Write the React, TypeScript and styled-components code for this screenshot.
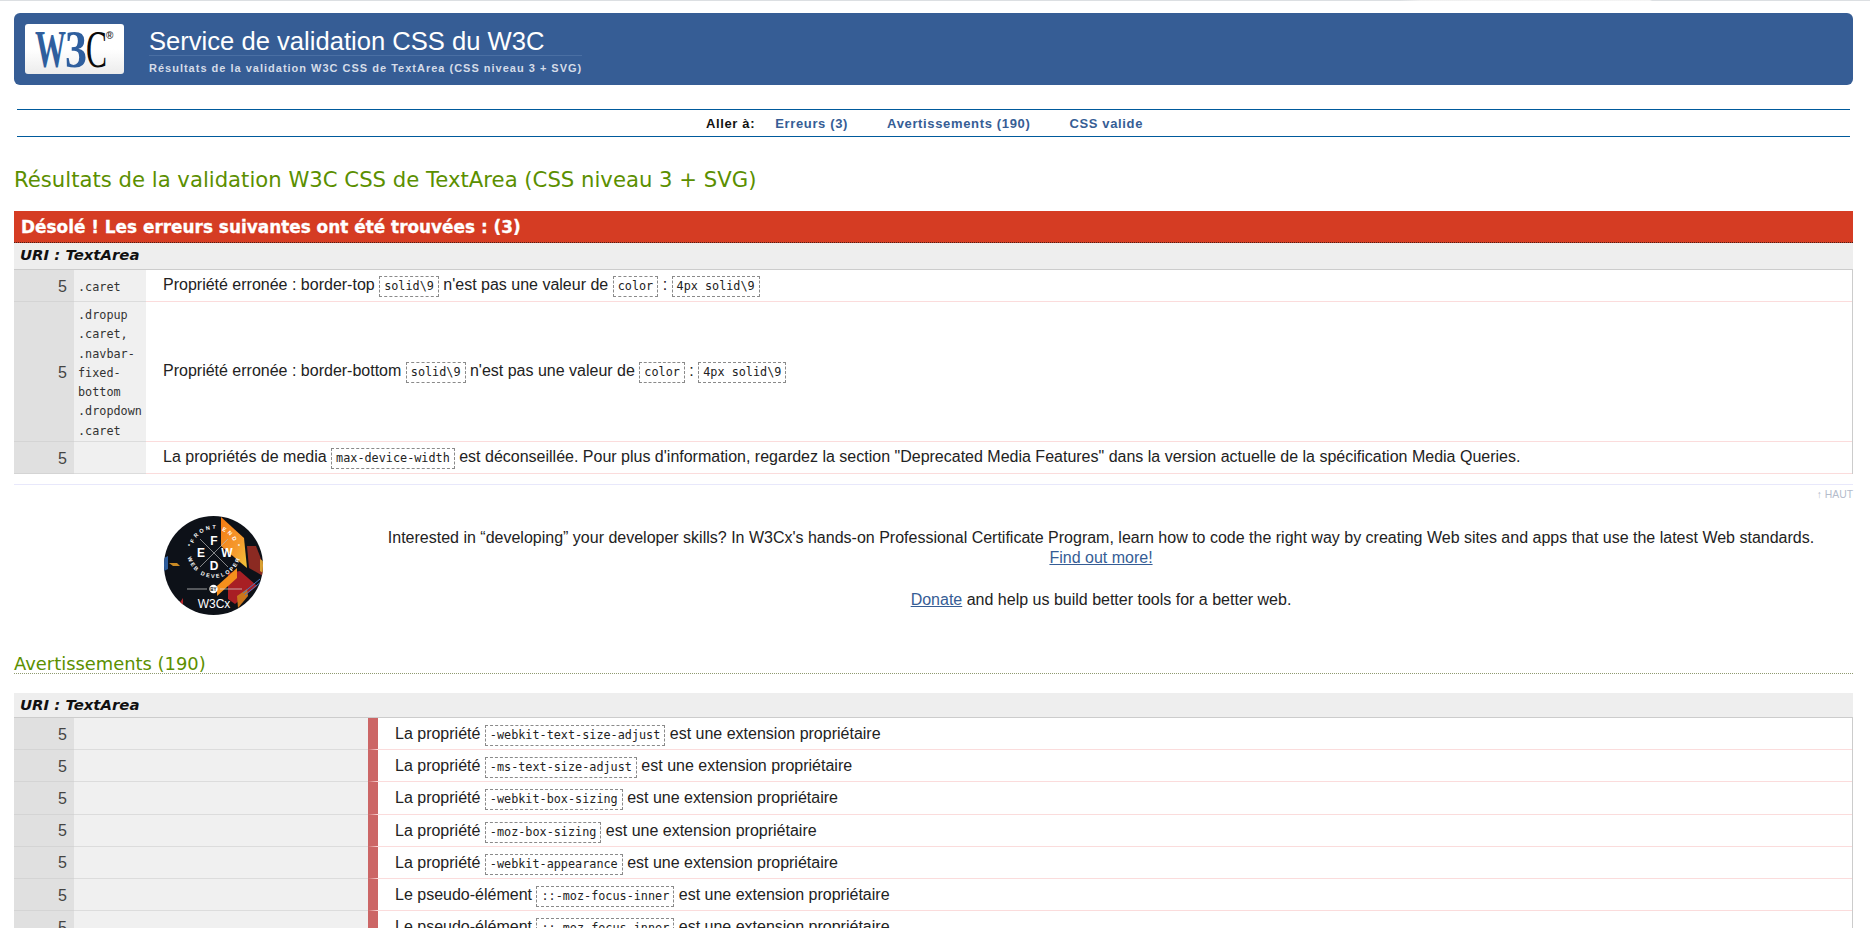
import React from "react";
import styled, { createGlobalStyle } from "styled-components";

const Global = createGlobalStyle`
  html, body { margin: 0; padding: 0; height: 928px; overflow: hidden; background: #fff; }
  body { font-family: "Liberation Sans", Arial, sans-serif; color: #222; }
`;

const TopEdge = styled.div`
  height: 1px;
  background: linear-gradient(90deg, #dcdfe2 0, #dcdfe2 1400px, #f0f0f0 1420px, #f4f4f4 1650px, #dcdfe2 1652px);
`;
const Page = styled.div`
  padding: 12px 17px 0 14px;
`;
const Banner = styled.header`
  height: 72px;
  background: #365d95;
  border-radius: 6px;
  display: flex;
  align-items: flex-start;
  padding: 11px 0 0 11px;
  box-sizing: border-box;
`;
const LogoBox = styled.div`
  width: 99px;
  height: 50px;
  border-radius: 3px;
  background: linear-gradient(180deg, #fff 0, #fff 50%, #ececec 100%);
  flex: none;
`;
const Titles = styled.div`
  margin-left: 25px;
`;
const Title = styled.h1`
  margin: 0;
  font: 400 25.6px/34px "Liberation Sans", Arial, sans-serif;
  color: #fff;
  border-bottom: 1px solid #4a6fa3;
  height: 31px;
`;
const Subtitle = styled.p`
  margin: 6px 0 0;
  font: 700 11px/13px "Liberation Sans", Arial, sans-serif;
  letter-spacing: 1px;
  color: #d5dce8;
`;
const Nav = styled.nav`
  margin: 24px 3px 0 3px;
  height: 26px;
  border-top: 1px solid #005a9c;
  border-bottom: 1px solid #005a9c;
  display: flex;
  justify-content: center;
  align-items: center;
  gap: 39px;
  padding-right: 18px;
  font: 700 13px "Liberation Sans", Arial, sans-serif;
  letter-spacing: 0.65px;
`;
const NavLabel = styled.span`
  color: #111;
  margin-right: -19px;
`;
const NavLink = styled.a`
  color: #365d95;
  text-decoration: none;
`;
const PageHeading = styled.h2`
  margin: 29px 0 17px;
  font: 400 21.2px/28px "DejaVu Sans", Verdana, sans-serif;
  color: #5b8f00;
`;
const ErrorBar = styled.h3`
  margin: 0;
  height: 32px;
  box-sizing: border-box;
  padding-left: 7px;
  background: #d53c23;
  border-bottom: 1px dotted #4a2018;
  color: #fff;
  -webkit-text-stroke: 0.3px #fff;
  font: 700 16.9px/33px "DejaVu Sans", Verdana, sans-serif;
`;
const UriBar = styled.h4<{ $h: number }>`
  margin: 0;
  height: ${(p) => p.$h}px;
  box-sizing: border-box;
  padding-left: 6px;
  background: #eee;
  border-bottom: 1px solid #ccc;
  color: #111;
  font: italic 700 14.9px/25px "DejaVu Sans", Verdana, sans-serif;
`;
const Table = styled.table`
  width: 100%;
  border-collapse: separate;
  border-spacing: 0;
  table-layout: fixed;
  border-right: 1px solid #ccc;
`;
const LineCell = styled.td`
  width: 60px;
  box-sizing: border-box;
  background: #e0e0e0;
  border-bottom: 1px solid #d4d4d4;
  text-align: right;
  padding: 2px 7px 0 0;
  font-size: 16px;
  color: #444;
`;
const ContextCell = styled.td<{ $w: number }>`
  width: ${(p) => p.$w}px;
  box-sizing: border-box;
  background: #f0f0f0;
  border-bottom: 1px solid #dcdcdc;
  padding: 4px 2px 0 4px;
  font: 11.8px/19.2px "DejaVu Sans Mono", monospace;
  color: #333;
`;
const MessageCell = styled.td<{ $warn?: boolean; $h: number }>`
  height: ${(p) => p.$h}px;
  box-sizing: border-box;
  border-bottom: 1px solid #fbdcdc;
  padding: ${(p) => (p.$warn ? 4 : 2)}px 0 0 17px;
  border-left: ${(p) => (p.$warn ? "10px solid #cc6666" : "0")};
  font-size: 16px;
  color: #222;
`;
const Code = styled.code`
  display: inline-block;
  border: 1px dashed #8a8a8a;
  padding: 2px 4px;
  line-height: 15px;
  font-family: "DejaVu Sans Mono", monospace;
  font-size: 11.8px;
  color: #222;
`;
const Rule = styled.hr`
  margin: 10px 0 0;
  border: 0;
  height: 1px;
  background: #e8e8fb;
`;
const BackTop = styled.a`
  display: block;
  text-align: right;
  margin-top: 4px;
  font-size: 10.4px;
  line-height: 12px;
  color: #b4bccb;
`;
const Promo = styled.section`
  display: flex;
  margin-top: 15px;
  padding-left: 150px;
  align-items: flex-start;
`;
const Badge = styled.svg`
  width: 99px;
  height: 99px;
  flex: none;
`;
const PromoText = styled.div`
  margin-left: 86px;
  flex: 1;
  padding-top: 12px;
  text-align: center;
  font-size: 16px;
  line-height: 20px;
  color: #222;
`;
const PromoPara = styled.p`
  margin: 0;
  & + & { margin-top: 22px; }
`;
const PromoLink = styled.a`
  color: #365d95;
  text-decoration: underline;
  white-space: nowrap;
`;
const WarnHeading = styled.h2`
  margin: 37px 0 0;
  height: 22px;
  box-sizing: border-box;
  font: 400 17.9px/24px "DejaVu Sans", Verdana, sans-serif;
  color: #5b8f00;
  border-bottom: 1px dotted #8f9a70;
`;
const WarnUri = styled(UriBar)`
  margin-top: 19px;
`;

const Logo = () => (
  <svg width="99" height="50" viewBox="0 0 99 50">
    <text x="10" y="43" fontFamily="Liberation Serif" fontWeight="700" fontSize="53" fill="#2f5f9e" textLength="31" lengthAdjust="spacingAndGlyphs">W</text>
    <text x="40" y="43" fontFamily="Liberation Serif" fontWeight="700" fontSize="53" fill="#2f5f9e" textLength="22" lengthAdjust="spacingAndGlyphs">3</text>
    <text x="61" y="43" fontFamily="Liberation Serif" fontSize="53" fill="#0a0a0a" textLength="21" lengthAdjust="spacingAndGlyphs">C</text>
    <text x="81" y="15" fontFamily="Liberation Sans" fontSize="10" fontWeight="700" fill="#333">®</text>
  </svg>
);

const FrontEndBadge = () => (
  <Badge viewBox="0 0 99 99">
    <defs>
      <clipPath id="disc"><circle cx="49.5" cy="49.5" r="49.5" /></clipPath>
      <linearGradient id="flame" x1="0" y1="0" x2="1" y2="1">
        <stop offset="0" stopColor="#f47a12" />
        <stop offset="0.6" stopColor="#f59a2e" />
        <stop offset="1" stopColor="#f1c53a" />
      </linearGradient>
      <path id="arcTop" d="M 28 35 A 22 22 0 0 1 72 35" />
      <path id="arcBottom" d="M 23 35 A 27 27 0 0 0 77 35" />
    </defs>
    <g clipPath="url(#disc)">
      <rect width="99" height="99" fill="#0d1118" />
      <polygon points="57,1 80,22 83,52 57,30" fill="url(#flame)" />
      <polygon points="83,30 92,30 99,48 99,60 85,52" fill="#8b2a22" />
      <polygon points="96,43 99,45 99,57 96,55" fill="#d8a032" />
      <polygon points="64,57 76,55 93,70 71,88 64,83" fill="#a81f24" />
      <polygon points="53,80 53,70 73,52 73,62" fill="#f58f1c" />
      <polygon points="73,80 83,73 84,80 74,92" fill="#c9761c" />
      <line x1="79" y1="77" x2="96" y2="63" stroke="#4a78c0" strokeWidth="1" />
      <line x1="81" y1="79" x2="98" y2="65" stroke="#4a78c0" strokeWidth="1" />
      <polygon points="0,42 4,40 4,53 0,55" fill="#2d5c9c" />
      <polygon points="5,47 13,47 16,50 9,50" fill="#c98a24" />
      <polygon points="15,88 19,82 19,90" fill="#b8262a" />
      <line x1="36" y1="23" x2="64" y2="51" stroke="#b9b9b9" strokeWidth="0.7" />
      <line x1="64" y1="23" x2="36" y2="51" stroke="#b9b9b9" strokeWidth="0.7" />
      <g fill="#fff" fontFamily="Liberation Sans" fontWeight="700" textAnchor="middle">
        <text x="50" y="29" fontSize="12">F</text>
        <text x="37" y="41" fontSize="12">E</text>
        <text x="63" y="41" fontSize="12">W</text>
        <text x="50" y="54" fontSize="12">D</text>
        <text fontSize="5.5" letterSpacing="2.3"><textPath href="#arcTop" startOffset="50%">FRONT END</textPath></text>
        <text fontSize="5.5" letterSpacing="1.8"><textPath href="#arcBottom" startOffset="50%">WEB DEVELOPER</textPath></text>
        <text x="25" y="32" fontSize="5">*</text>
        <text x="75" y="32" fontSize="5">*</text>
        <text x="50" y="92" fontSize="12" fontWeight="400">W3Cx</text>
      </g>
      <line x1="23" y1="73" x2="43" y2="73" stroke="#ddd" strokeWidth="0.7" />
      <line x1="56" y1="73" x2="78" y2="73" stroke="#ddd" strokeWidth="0.7" />
      <circle cx="49.5" cy="73" r="4.2" fill="#fff" />
      <text x="49.5" y="75" fontSize="4.5" fontWeight="700" fontFamily="Liberation Sans" textAnchor="middle" fill="#111">BY</text>
    </g>
  </Badge>
);

const warnings: [string, string][] = [
  ["La propriété", "-webkit-text-size-adjust"],
  ["La propriété", "-ms-text-size-adjust"],
  ["La propriété", "-webkit-box-sizing"],
  ["La propriété", "-moz-box-sizing"],
  ["La propriété", "-webkit-appearance"],
  ["Le pseudo-élément", "::-moz-focus-inner"],
  ["Le pseudo-élément", "::-moz-focus-inner"],
  ["La propriété", "-webkit-appearance"],
];

export default function App() {
  return (
    <>
      <Global />
      <TopEdge />
      <Page>
        <Banner>
          <LogoBox><Logo /></LogoBox>
          <Titles>
            <Title>Service de validation CSS du W3C</Title>
            <Subtitle>Résultats de la validation W3C CSS de TextArea (CSS niveau 3 + SVG)</Subtitle>
          </Titles>
        </Banner>
        <Nav>
          <NavLabel>Aller à:</NavLabel>
          <NavLink href="#e">Erreurs (3)</NavLink>
          <NavLink href="#w">Avertissements (190)</NavLink>
          <NavLink href="#v">CSS valide</NavLink>
        </Nav>
        <PageHeading>Résultats de la validation W3C CSS de TextArea (CSS niveau 3 + SVG)</PageHeading>
        <ErrorBar>Désolé ! Les erreurs suivantes ont été trouvées : (3)</ErrorBar>
        <UriBar $h={27}>URI : TextArea</UriBar>
        <Table>
          <tbody>
            <tr>
              <LineCell>5</LineCell>
              <ContextCell $w={72}>.caret</ContextCell>
              <MessageCell $h={32}>Propriété erronée : border-top <Code>solid\9</Code> n'est pas une valeur de <Code>color</Code> : <Code>4px solid\9</Code></MessageCell>
            </tr>
            <tr>
              <LineCell>5</LineCell>
              <ContextCell $w={72}>.dropup .caret, .navbar-fixed-bottom .dropdown .caret</ContextCell>
              <MessageCell $h={140}>Propriété erronée : border-bottom <Code>solid\9</Code> n'est pas une valeur de <Code>color</Code> : <Code>4px solid\9</Code></MessageCell>
            </tr>
            <tr>
              <LineCell>5</LineCell>
              <ContextCell $w={72} />
              <MessageCell $h={32}>La propriétés de media <Code>max-device-width</Code> est déconseillée. Pour plus d'information, regardez la section "Deprecated Media Features" dans la version actuelle de la spécification Media Queries.</MessageCell>
            </tr>
          </tbody>
        </Table>
        <Rule />
        <BackTop>↑ HAUT</BackTop>
        <Promo>
          <FrontEndBadge />
          <PromoText>
            <PromoPara>
              Interested in “developing” your developer skills? In W3Cx's hands-on Professional Certificate Program, learn how to code the right way by creating Web sites and apps that use the latest Web standards. <PromoLink href="#f">Find out more!</PromoLink>
            </PromoPara>
            <PromoPara>
              <PromoLink href="#d">Donate</PromoLink> and help us build better tools for a better web.
            </PromoPara>
          </PromoText>
        </Promo>
        <WarnHeading>Avertissements (190)</WarnHeading>
        <WarnUri $h={25}>URI : TextArea</WarnUri>
        <Table>
          <tbody>
            {warnings.map(([label, code], i) => (
              <tr key={i}>
                <LineCell>5</LineCell>
                <ContextCell $w={294} />
                <MessageCell $warn $h={32.2}>{label} <Code>{code}</Code> est une extension propriétaire</MessageCell>
              </tr>
            ))}
          </tbody>
        </Table>
      </Page>
    </>
  );
}
